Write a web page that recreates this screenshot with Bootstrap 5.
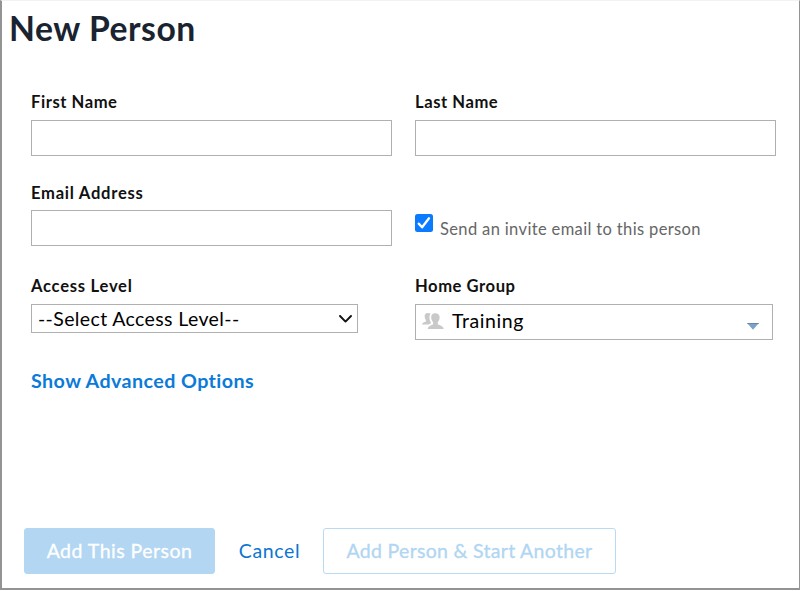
<!DOCTYPE html>
<html lang="en">
<head>
<meta charset="utf-8">
<meta name="viewport" content="width=device-width, initial-scale=1">
<title>New Person</title>
<link href="https://cdn.jsdelivr.net/npm/bootstrap@5.3.0/dist/css/bootstrap.min.css" rel="stylesheet">
<style>
body{font-family:Lato,"Open Sans",sans-serif;font-variant-ligatures:none;color:#000;height:591px;overflow:hidden;background:#fff}
.panel{height:590px;border:solid #939393;border-width:1px 1px 2px 2px;border-top-color:#f2f2f2}
.page-title{font-size:33.700px;font-weight:700;line-height:40px;height:47px;color:#1a2431;padding:7px 0 0 7px;letter-spacing:.54px}
.fields{display:grid;grid-template-columns:361px 361px;column-gap:23px;padding-left:29px;margin-top:44px}
.field-label{display:block;font-size:16.600px;font-weight:700;line-height:20px;color:#111;margin:0;letter-spacing:.55px}
.field-label.wide{letter-spacing:.73px}
.box{border:1px solid #b0b0b0;border-radius:0;background:#fff;height:36px;padding:0 6px;color:#000}
.row-name{height:91px}.row-mail{height:93px}.row-level{height:92px}
.row-name .box,.row-level .box{margin-top:8px}
.row-mail .box{margin-top:7px}
.invite{padding-top:31px;gap:7px}
.tick{width:18px;height:18px;margin:0;border:0;border-radius:2.5px!important;flex:none}
.tick:checked[type=checkbox]{background-color:#0a7aff;background-image:url("data:image/svg+xml,%3Csvg xmlns='http://www.w3.org/2000/svg' viewBox='0 0 18 18'%3E%3Cpath d='M3.700 9.600L7.100 13.300L14 4.300' fill='none' stroke='%23fff' stroke-width='2.300' stroke-linecap='round' stroke-linejoin='round'/%3E%3C/svg%3E")}
.invite-text{font-size:16.500px;line-height:20px;color:#666;margin-top:5px;letter-spacing:.36px}
.level{width:327px;height:29px;font-size:19.500px;line-height:27px;padding-right:5px;letter-spacing:.38px}
.group{width:358px;font-size:19.500px;line-height:32px;letter-spacing:.6px}
.caret{margin:18px 7px 0 auto}
.advanced{font-size:19.700px;font-weight:700;line-height:25px;height:24px;color:#0b7ad8;margin-left:29px;letter-spacing:.42px}
.actions{margin-top:136px;padding-left:22px}
.act{height:46px;border-radius:3px;font-size:19.500px;line-height:43px;padding:0 0 1px;border:1px solid transparent;letter-spacing:.48px}
.act.add{width:191px;background:#b3d7f2;color:#fff;opacity:1;border-color:#b3d7f2;-webkit-text-stroke:.3px #fff}
.act.cancel{width:109px;margin-right:-1px;color:#0b76d1;letter-spacing:.66px}
.act.another{width:293px;color:#b0d6f2;border-color:#b9daf3;opacity:1;letter-spacing:.3px;-webkit-text-stroke:.3px #b0d6f2}
</style>
<script src="https://cdn.jsdelivr.net/npm/bootstrap@5.3.0/dist/js/bootstrap.bundle.min.js"></script>
</head>
<body>
<main class="panel">
  <h1 class="page-title mb-0">New Person</h1>
  <form>
    <div class="fields">
      <div class="row-name"><label class="field-label" for="first">First Name</label><input id="first" class="form-control box" type="text"></div>
      <div class="row-name"><label class="field-label" for="last">Last Name</label><input id="last" class="form-control box" type="text"></div>
      <div class="row-mail"><label class="field-label wide" for="mail">Email Address</label><input id="mail" class="form-control box" type="email"></div>
      <div class="row-mail invite d-flex align-items-start">
        <input id="invite" class="form-check-input tick" type="checkbox" checked>
        <label class="invite-text" for="invite">Send an invite email to this person</label>
      </div>
      <div class="row-level"><span class="field-label wide">Access Level</span>
        <div class="box level d-flex align-items-center justify-content-between" role="combobox">
          <span>--Select Access Level--</span>
          <svg width="13" height="8" viewBox="0 0 13 8" fill="none" stroke="#111" stroke-width="1.9" stroke-linecap="round" stroke-linejoin="round"><path d="M1 1l5.500 5.600L12 1"/></svg>
        </div>
      </div>
      <div class="row-level"><span class="field-label">Home Group</span>
        <div class="box group d-flex align-items-start" role="combobox">
          <svg class="mt-2" width="22" height="17" viewBox="0 0 22 17" fill="#c9c9c9"><path d="M5.800 0C3.500 0 2.500 1.300 2.700 3.600c.1 1.800.6 2.700 1.200 3.500v1.500C2.500 9.500.2 9.700 0 11.500h6.800c.7-.6 1.700-1 2.500-1.400C8 8.500 7.300 6.300 7.500 3.700 7.600 2.300 8 1.400 8.700.8 8 .2 7 0 5.800 0z"/><path d="M13.200.2C10.500.2 9 1.800 9.200 4.600c.1 2.200.8 3.600 1.900 4.700v1.900C9.300 12.600 6 12.600 5.700 16h16c-.3-3.400-3.900-3.400-5.900-4.800V9.300c1-1.100 1.700-2.500 1.800-4.700C17.800 1.800 16 .2 13.200.2z"/></svg>
          <span class="ms-2">Training</span>
          <svg class="caret" width="12" height="7" viewBox="0 0 12 7"><path d="M.3.300h11.400L6 6.700z" fill="#7ba3c9"/><path d="M.3.500h11.400" stroke="#6488a8"/></svg>
        </div>
      </div>
    </div>
    <div class="advanced">Show Advanced Options</div>
    <div class="actions d-flex">
      <button type="button" class="btn act add" disabled>Add This Person</button>
      <button type="button" class="btn act cancel">Cancel</button>
      <button type="button" class="btn act another" disabled>Add Person &amp; Start Another</button>
    </div>
  </form>
</main>
</body>
</html>
